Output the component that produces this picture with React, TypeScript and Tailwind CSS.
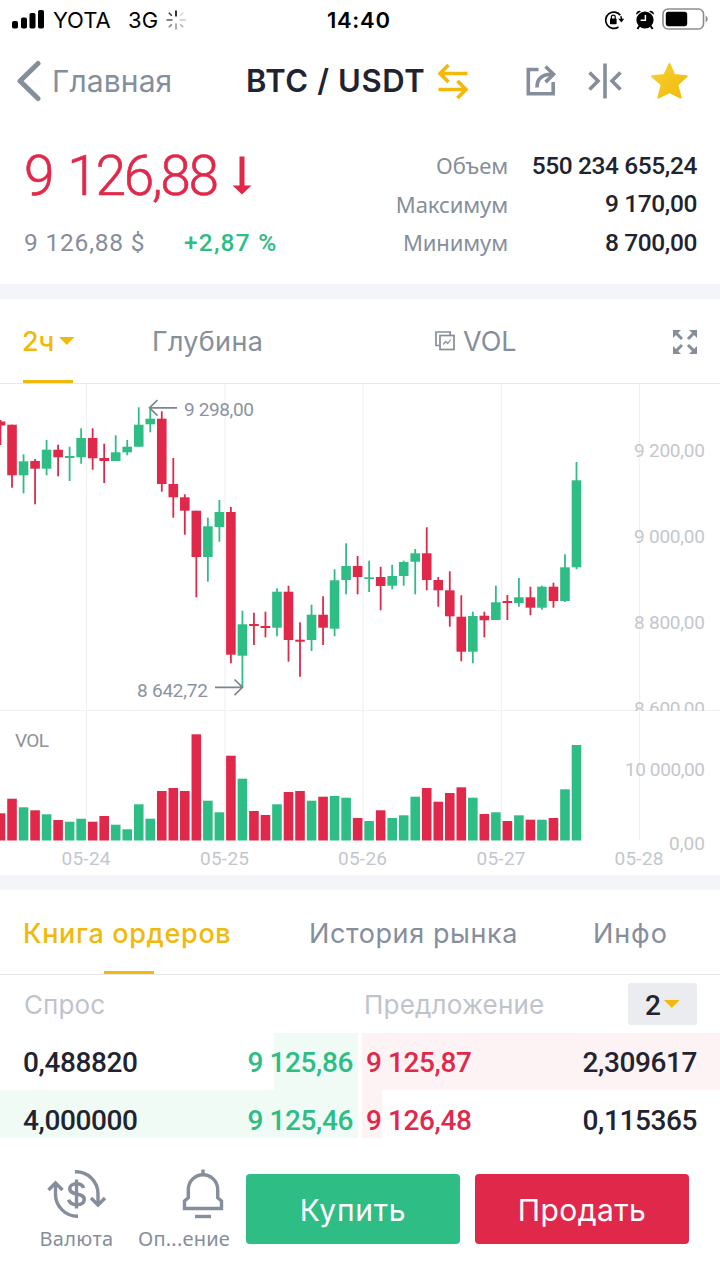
import React from "react";

type Candle = {
  up: boolean;
  high: number;
  top: number;
  bottom: number;
  low: number;
  vol: number;
};

const UP = "#2ebd85";
const DOWN = "#e0294a";
const STEP = 11.52;
const VOL_BASE = 840.5;

// [up, high, body top, body bottom, low, volume top]
const raw: [number, number, number, number, number, number][] = [
  [0, 420, 421.5, 425.5, 445, 813.3],
  [0, 424.7, 424.7, 475.3, 487.7, 798.7],
  [1, 454.3, 461.3, 475.3, 493.3, 807.3],
  [0, 459, 461, 468.7, 504.3, 810.3],
  [1, 440, 449.7, 468.7, 475.3, 814.3],
  [0, 444.7, 449.7, 457.3, 476.3, 820],
  [1, 446.7, 456, 458, 481, 821.7],
  [1, 428.3, 438, 457.3, 463.7, 818.7],
  [0, 428.3, 438, 458.3, 469.7, 821.7],
  [0, 443.7, 458, 461, 483, 816],
  [1, 435.3, 452.3, 461, 461, 824.7],
  [1, 440, 446.7, 452.3, 455.3, 829.3],
  [1, 407.3, 424.7, 446.7, 446.7, 804.3],
  [1, 408, 418.7, 424.3, 432.3, 818.7],
  [0, 411.3, 418.7, 484, 491.7, 791],
  [0, 458, 484, 497.3, 517.7, 788],
  [0, 494.3, 497.3, 510.7, 534.7, 791],
  [0, 510.7, 510.7, 557, 597.3, 734.3],
  [1, 517.7, 526.3, 557, 581.7, 800.7],
  [1, 500, 512, 527, 541.7, 812.3],
  [0, 507, 512, 654.7, 663.3, 755.7],
  [1, 610.7, 624.3, 655.7, 687.3, 778.7],
  [0, 612.7, 624, 626, 645, 811],
  [0, 611.7, 626, 628, 637.3, 815],
  [1, 588.3, 591.7, 627.7, 636.3, 804.3],
  [0, 585.7, 591.7, 640, 661.7, 792],
  [0, 622.3, 639.7, 641.7, 676.7, 791],
  [1, 604.7, 614.7, 640, 651, 800.7],
  [0, 596.3, 614.7, 627.7, 645, 796.7],
  [1, 569.3, 580.3, 628.7, 636.3, 796],
  [1, 543.3, 566, 580, 594.3, 797.7],
  [0, 556, 566, 577, 594.3, 818],
  [1, 560.7, 577.3, 579, 592, 821],
  [0, 566.7, 577, 586, 610.3, 810.3],
  [1, 564.7, 576, 585.7, 589.3, 818],
  [1, 560.7, 562, 576, 585.7, 815.3],
  [1, 549, 553.3, 561.7, 594.3, 796.7],
  [0, 527.3, 553.3, 580, 590.3, 788],
  [0, 577, 580, 590.3, 606.7, 801.7],
  [0, 571.3, 590.3, 616.3, 626.7, 793],
  [0, 595.3, 616.7, 651.7, 661.3, 787.3],
  [1, 611.7, 616, 651.7, 663.3, 797.7],
  [0, 611.7, 615.7, 620.3, 637.3, 814],
  [1, 585.7, 602.3, 620, 620, 812.3],
  [0, 595, 601, 603, 620, 821],
  [1, 578, 597.3, 603, 606.7, 815.3],
  [0, 586.7, 597.3, 607.7, 615.3, 819.7],
  [1, 585.7, 586.7, 607.7, 609.7, 819.7],
  [0, 582.7, 586.7, 601, 607.7, 818],
  [1, 554.3, 567.3, 601, 602, 789.3],
  [1, 462, 480.3, 567.3, 569.3, 745],
];

const candles: Candle[] = raw.map(([up, high, top, bottom, low, vol]) => ({
  up: up === 1,
  high,
  top,
  bottom,
  low,
  vol,
}));

const days = [
  { x: 86.5, label: "05-24" },
  { x: 225, label: "05-25" },
  { x: 363, label: "05-26" },
  { x: 501.5, label: "05-27" },
  { x: 639.5, label: "05-28" },
];

const prices = [
  { y: 457, label: "9 200,00" },
  { y: 543, label: "9 000,00" },
  { y: 628.5, label: "8 800,00" },
  { y: 715, label: "8 600,00" },
];

const StatusBar = () => (
  <div className="flex h-10 items-center text-black">
    <svg className="ml-3 h-5 w-8 shrink-0" viewBox="0 0 32 20" fill="currentColor">
      <rect x="0" y="11" width="6" height="7.5" rx="1.8" />
      <rect x="9" y="7.5" width="6" height="11" rx="1.8" />
      <rect x="17.5" y="3" width="6" height="15.5" rx="1.8" />
      <rect x="26" y="0" width="6" height="18.5" rx="1.8" />
    </svg>
    <span className="ml-[9px] w-[75px] shrink-0 whitespace-nowrap text-[22px] tracking-[-0.1px]">YOTA</span>
    <span className="w-[38px] shrink-0 whitespace-nowrap text-[22px] tracking-[0.1px]">3G</span>
    <svg className="h-5 w-5 shrink-0" viewBox="0 0 20 20" stroke="#000" strokeWidth="1.6">
      <path d="M10 0.5v6" />
      <path d="M14.2 5.8l3-3.3" opacity=".15" />
      <path d="M13.5 10h6" opacity=".2" />
      <path d="M14.2 14.2l3 3" opacity=".3" />
      <path d="M10 13.5v6" opacity=".4" />
      <path d="M5.8 14.2l-3 3" opacity=".5" />
      <path d="M0.5 10h6" opacity=".6" />
      <path d="M5.8 5.8l-3-3" opacity=".75" />
    </svg>
    <span className="ml-[141px] w-[277px] shrink-0 text-[22px] font-semibold tracking-[0.7px]">14:40</span>
    <svg className="h-5 w-5 shrink-0" viewBox="0 0 20 20" fill="none" stroke="#000">
      <path d="M16.3 5.2A8.2 8.2 0 1 0 14.5 17" strokeWidth="1.7" />
      <path d="M16.8 6.3a8 8 0 0 1 .7 4" strokeWidth="1.5" />
      <path d="M14.3 8.7h6L17.4 12.6z" fill="#000" stroke="none" />
      <rect x="6" y="8.6" width="6.6" height="5.6" rx=".6" fill="#000" stroke="none" />
      <path d="M7.4 9V7a1.9 1.9 0 0 1 3.8 0v2" strokeWidth="1.2" />
    </svg>
    <svg className="ml-[11px] h-5 w-5 shrink-0" viewBox="0 0 20 20">
      <circle cx="10" cy="10" r="8.6" />
      <path d="M1.2 4.8A3.2 3.2 0 0 1 6 1.3zM18.8 4.8A3.2 3.2 0 0 0 14 1.3z" />
      <path d="M4.4 16l-2 3M15.6 16l2 3" stroke="#000" strokeWidth="2" />
      <path d="M10.4 5v5.3H5.6" fill="none" stroke="#fff" strokeWidth="1.5" />
    </svg>
    <svg className="ml-[7px] mt-[-3px] h-[22px] w-[47px] shrink-0" viewBox="0 0 47 22">
      <rect x="1" y="1" width="40.5" height="20" rx="5" fill="none" stroke="#8d8d8d" strokeWidth="1.6" />
      <rect x="3.8" y="3.8" width="21.4" height="14.4" rx="2.6" />
      <path d="M43.6 7.5a4 4 0 0 1 0 7z" fill="#8d8d8d" />
    </svg>
  </div>
);

const Header = () => (
  <div className="flex h-[82px] items-center text-[#868e9c]">
    <svg className="ml-4 h-[42px] w-[26px] shrink-0" viewBox="0 0 26 42" fill="none" stroke="currentColor" strokeWidth="5" strokeLinecap="round" strokeLinejoin="round">
      <path d="M22 3.5L4 21L22 38.5" />
    </svg>
    <span className="ml-[10px] w-[194px] shrink-0 whitespace-nowrap text-[30px] tracking-[0.1px]">Главная</span>
    <span className="w-[190px] shrink-0 whitespace-nowrap text-[31px] font-semibold tracking-[0.6px] text-[#1f2430]">BTC / USDT</span>
    <svg className="h-9 w-8 shrink-0" viewBox="0 0 32 36" fill="none" stroke="#f0b90b" strokeWidth="3.6">
      <path d="M31.5 10.5H5M12.5 2L4 10.5l8.5 8.5" />
      <path d="M2.500 26.5h27M21.500 18l8.500 8.500L21.500 35" />
    </svg>
    <svg className="ml-[57px] h-8 w-8 shrink-0" viewBox="0 0 32 32" fill="none" stroke="currentColor" strokeWidth="3.6">
      <path d="M13.5 4.5H3.3V28.800H28.2V17" />
      <path d="M12 22.5c0-8.500 4.500-13 14.500-13.200" />
      <path d="M20.500 1.500l8 7.800-8 7.800" />
    </svg>
    <svg className="ml-[30px] h-9 w-9 shrink-0" viewBox="0 0 36 36" fill="none" stroke="currentColor" strokeWidth="3.6">
      <path d="M18 .5v35" />
      <path d="M2.500 9.500l8.500 8.500-8.500 8.500M33.500 9.500L25 18l8.500 8.500" />
    </svg>
    <svg className="ml-[27px] h-[38px] w-[40px] shrink-0" viewBox="0 0 40 38">
      <defs>
        <linearGradient id="star" x1="0" y1="0" x2="1" y2="1">
          <stop offset="0" stopColor="#f8d12f" />
          <stop offset="1" stopColor="#f0b90b" />
        </linearGradient>
      </defs>
      <path d="M19.500 2l4.700 11 12.500 1.200-9.400 8.500 3.300 12.800-11.100-5.300-11.100 5.300 3.300-12.800L2 14.200l12.500-1.200z" fill="url(#star)" stroke="url(#star)" strokeWidth="2" strokeLinejoin="round" />
    </svg>
  </div>
);

const Summary = () => (
  <div className="flex h-[162px] justify-between pl-6 pr-[23px]">
    <div className="flex flex-col">
      <div className="mt-[22px] flex h-16 items-center text-[#e0294a]">
        <span className="w-[208px] whitespace-nowrap font-['Roboto'] text-[55px] font-light tracking-[-2.3px] [-webkit-text-stroke:0.6px] [word-spacing:4px]">9 126,88</span>
        <svg className="h-10 w-5" viewBox="0 0 20 40" fill="currentColor">
          <path d="M7.5 0.500h5v29H19.500L10 38.500 .5 29.500h7z" />
        </svg>
      </div>
      <div className="mt-[17px] flex h-9 items-center font-['Roboto'] text-[24.5px]">
        <span className="w-[160px] tracking-[0.8px] text-[#868e9c]">9 126,88 $</span>
        <span className="font-medium tracking-[1.2px] text-[#2ebd85]">+2,87 %</span>
      </div>
    </div>
    <div className="mt-[25px] flex flex-col">
      {[
        ["Объем", "550 234 655,24"],
        ["Максимум", "9 170,00"],
        ["Минимум", "8 700,00"],
      ].map(([label, value]) => (
        <div key={label} className="flex h-[38.4px] items-center justify-end">
          <span className="pb-px font-['Noto_Sans'] text-[22px] tracking-[-0.1px] text-[#868e9c]">{label}</span>
          <span className="w-[189px] text-right font-['Roboto'] text-[24.5px] font-medium tracking-[-0.4px] text-[#1f2430]">{value}</span>
        </div>
      ))}
    </div>
  </div>
);

const ChartTabs = () => (
  <div className="flex h-[85px] items-center border-b border-[#e6e8ea] text-[27px] text-[#868e9c]">
    <div className="ml-[23px] flex h-full w-[50px] shrink-0 items-center border-b-[3px] border-[#f0b90b] pt-[5px] font-medium text-[#f0b90b]">
      <span className="ml-[-1px] w-[37px] shrink-0 whitespace-nowrap tracking-[-0.2px]">2ч</span>
      <svg className="mt-[-2px] h-2 w-4 shrink-0" viewBox="0 0 16 8" fill="currentColor">
        <path d="M0 0h15.5L7.8 8z" />
      </svg>
    </div>
    <span className="ml-[79px] w-[283px] shrink-0 whitespace-nowrap pt-[3px] tracking-[0.3px]">Глубина</span>
    <svg className="h-5 w-5 shrink-0" viewBox="0 0 20 20" fill="none" stroke="currentColor" strokeWidth="1.7">
      <path d="M4.5 14.5H1V1h14.2v3" />
      <rect x="5" y="4.5" width="14" height="14" />
      <path d="M8.2 13.5l2.5-3 2 2 3-4" strokeWidth="1.2" />
    </svg>
    <span className="ml-[8px] w-[210px] shrink-0 pt-[3px]">VOL</span>
    <svg className="mt-[2px] h-6 w-6 shrink-0" viewBox="0 0 24 24" fill="currentColor" stroke="currentColor">
      <path d="M0 0h8L0 8zM24 0v8L16 0zM0 24v-8l8 8zM24 24h-8l8-8z" stroke="none" />
      <path d="M3 3l6 6M21 3l-6 6M3 21l6-6M21 21l-6-6" strokeWidth="3" />
    </svg>
  </div>
);

const Chart = () => (
  <svg className="block h-[491px] w-full font-['Roboto']" viewBox="0 384 720 491">
    <g stroke="#f0f1f3" strokeWidth="1.2">
      {days.map((d) => (
        <path key={d.label} d={`M${d.x} 384V840`} />
      ))}
      <path d="M0 710.5H720" />
    </g>

    <clipPath id="priceArea">
      <rect x="0" y="384" width="720" height="327" />
    </clipPath>
    <g clipPath="url(#priceArea)" fontSize="19" fill="#c3c7cd" textAnchor="end">
      {prices.map((p) => (
        <text key={p.label} x="705" y={p.y} textLength="71">{p.label}</text>
      ))}
    </g>
    <g fontSize="19" fill="#c3c7cd" textAnchor="end">
      <text x="705" y="775.5" textLength="80">10 000,00</text>
      <text x="705" y="849.5" textLength="36">0,00</text>
    </g>

    {candles.map((c, i) => {
      const x = 0.5 + i * STEP;
      return (
        <g key={i} fill={c.up ? UP : DOWN}>
          <rect x={x - 0.9} y={c.high} width="1.8" height={c.low - c.high} />
          <rect x={x - 4.8} y={c.top} width="9.6" height={c.bottom - c.top} />
          <rect x={x - 4.8} y={c.vol} width="9.6" height={VOL_BASE - c.vol} />
        </g>
      );
    })}

    <g fill="none" stroke="#7c8593" strokeWidth="1.7">
      <path d="M177 407.8H150M157.5 400l-8 7.8 8 7.8" />
      <path d="M215 687.3H242M234.5 679.5l8 7.8-8 7.8" />
    </g>
    <g fontSize="19" fill="#8b93a0">
      <text x="184" y="415.5" textLength="70">9 298,00</text>
      <text x="137" y="696.5" textLength="71">8 642,72</text>
      <text x="15" y="746.5" textLength="34">VOL</text>
    </g>

    <g fontSize="19" fill="#c3c7cd" textAnchor="middle">
      {days.map((d) => (
        <text key={d.label} x={d.x - 0.5} y="864.5" textLength="49">{d.label}</text>
      ))}
    </g>
  </svg>
);

const BookTabs = () => (
  <div className="flex h-[85px] border-b border-[#e6e8ea] text-[27px] text-[#868e9c]">
    <div className="ml-6 flex w-[210px] shrink-0 flex-col items-center">
      <span className="ml-[-1px] flex flex-1 items-center self-start whitespace-nowrap pt-[7px] font-medium tracking-[0.65px] text-[#f0b90b]">Книга ордеров</span>
      <div className="h-[3px] w-[50px] bg-[#f0b90b]" />
    </div>
    <span className="ml-[75px] flex w-[284px] shrink-0 items-center whitespace-nowrap pt-[5px] tracking-[0.6px]">История рынка</span>
    <span className="flex items-center pt-[5px] tracking-[0.9px]">Инфо</span>
  </div>
);

const OrderBook = () => (
  <div className="flex h-[163px] flex-col">
    <div className="flex h-[58px] shrink-0 items-center pl-6 pr-[23px] text-[26px] text-[#bfc4cb]">
      <span className="w-[340px] shrink-0 tracking-[0.1px]">Спрос</span>
      <span className="flex-1 tracking-[0.2px]">Предложение</span>
      <div className="flex h-[42px] w-[69px] items-center rounded-[3px] bg-[#eaecef] pl-[17px] pt-[3px] font-['Roboto'] text-[28px] font-medium text-[#1f2430]">
        2
        <svg className="ml-[3px] mt-[-4px] h-2 w-4" viewBox="0 0 16 8" fill="#f0b90b">
          <path d="M0 0h15.5L7.8 8z" />
        </svg>
      </div>
    </div>
    <div className="flex h-[57px] shrink-0 items-center font-['Roboto'] text-[28px] font-medium tracking-[-0.4px] text-[#1f2430]">
      <div className="flex h-full w-[358px] items-center bg-linear-to-r from-transparent from-[274px] to-[#f1fbf6] to-[274px] pl-[23px] pr-[5px] pt-[3px]">
        <span className="flex-1">0,488820</span>
        <span className="text-[#2ebd85]">9 125,86</span>
      </div>
      <div className="ml-1 flex h-full flex-1 items-center bg-[#fdf2f4] pl-1 pr-[23px] pt-[3px]">
        <span className="flex-1 text-[#e0294a]">9 125,87</span>
        <span>2,309617</span>
      </div>
    </div>
    <div className="flex h-12 shrink-0 items-center overflow-hidden font-['Roboto'] text-[28px] font-medium tracking-[-0.4px] text-[#1f2430]">
      <div className="flex h-full w-[358px] items-center bg-[#f1fbf6] pl-[23px] pr-[5px] pt-[13px]">
        <span className="flex-1">4,000000</span>
        <span className="text-[#2ebd85]">9 125,46</span>
      </div>
      <div className="ml-1 flex h-full flex-1 items-center bg-linear-to-r from-[#fdf2f4] from-[20px] to-transparent to-[20px] pl-1 pr-[23px] pt-[13px]">
        <span className="flex-1 text-[#e0294a]">9 126,48</span>
        <span>0,115365</span>
      </div>
    </div>
  </div>
);

const Footer = () => (
  <div className="flex h-[142px] bg-white text-[#868e9c]">
    <div className="ml-[30px] flex w-[93px] shrink-0 flex-col items-center pt-[31px]">
      <svg className="h-[50px] w-[60px]" viewBox="0 0 60 50" fill="none" stroke="currentColor" strokeWidth="3.4">
        <path d="M28 2.8A22 22 0 0 1 51 25v10" />
        <path d="M44 29l7 7 7-7" />
        <path d="M31 47.200A22 22 0 0 1 8.500 25V15" />
        <path d="M1.500 21l7-7 7 7" />
        <path d="M29.500 10.500v29" />
        <path d="M36.500 19c-.8-3-3.500-4.200-7-4.200-4 0-6.700 1.900-6.700 5 0 7.200 14.400 3.200 14.400 10.600 0 3.300-3 5.200-7.200 5.200-4.500 0-7.500-1.800-8.300-5" strokeWidth="3.6" />
      </svg>
      <span className="mt-[6px] whitespace-nowrap font-['Noto_Sans'] text-[20px] leading-[28px] tracking-[0.3px]">Валюта</span>
    </div>
    <div className="ml-[9px] flex w-[104px] shrink-0 flex-col items-center pt-[31px]">
      <svg className="ml-[37px] h-[50px] w-[42px]" viewBox="0 0 42 50" fill="none" stroke="currentColor" strokeWidth="3.4">
        <path d="M21 .5v6" />
        <path d="M2.500 39.500V32l3.800-3.200V20.500a14.700 14.700 0 0 1 29.400 0V28.800L39.500 32v7.500z" />
        <path d="M13 47.500h16" />
      </svg>
      <span className="mt-[6px] whitespace-nowrap font-['Noto_Sans'] text-[20px] leading-[28px] tracking-[0.2px]">Оп...ение</span>
    </div>
    <button className="ml-[10px] mt-9 flex h-[70px] w-[214px] shrink-0 items-center justify-center rounded-[4px] bg-[#2ebd85] pt-[3px] text-[30px] tracking-[0.7px] text-white">Купить</button>
    <button className="ml-[15px] mt-9 flex h-[70px] w-[214px] shrink-0 items-center justify-center rounded-[4px] bg-[#e0294a] pt-[3px] text-[30px] tracking-[0.4px] text-white">Продать</button>
  </div>
);

const App: React.FC = () => {
  return (
    <div className="flex h-[1280px] w-[720px] flex-col overflow-hidden bg-white font-['Inter',sans-serif]">
      <StatusBar />
      <Header />
      <Summary />
      <div className="h-[15px] bg-[#f4f5f8]" />
      <ChartTabs />
      <Chart />
      <div className="h-[15px] bg-[#f4f5f8]" />
      <BookTabs />
      <OrderBook />
      <Footer />
    </div>
  );
};

export default App;
